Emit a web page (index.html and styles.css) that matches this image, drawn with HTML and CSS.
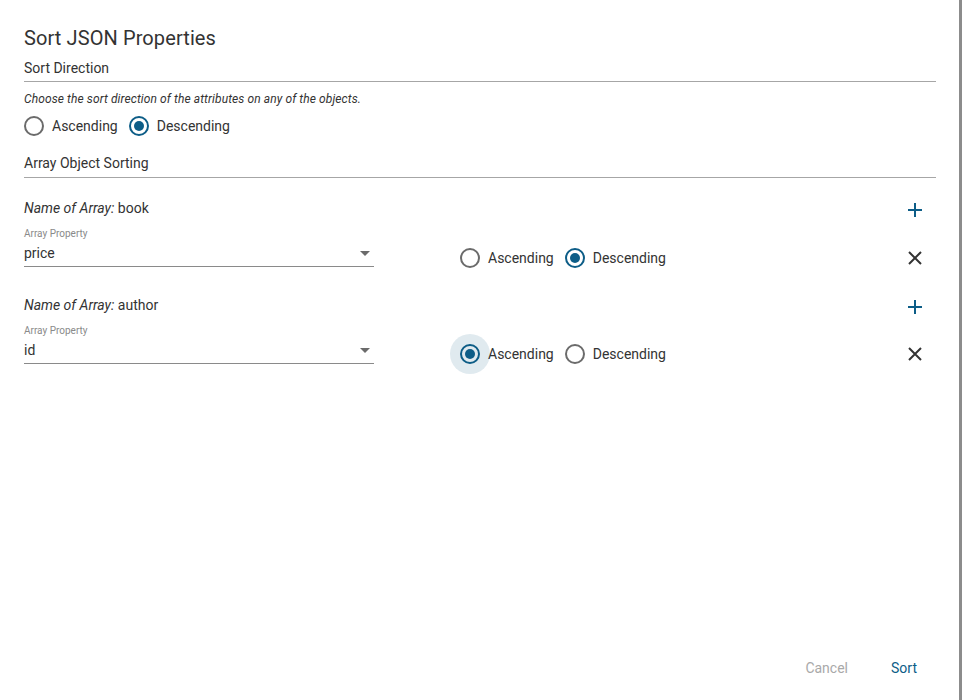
FILE: index.html
```html
<!DOCTYPE html>
<html lang="en">
<head>
<meta charset="utf-8">
<title>Sort JSON Properties</title>
<link rel="stylesheet" href="styles.css">
</head>
<body>
<div class="dialog">
  <h1 class="title">Sort JSON Properties</h1>
  <div class="section-title">Sort Direction</div>
  <div class="hint">Choose the sort direction of the attributes on any of the objects.</div>
  <div class="radio-group top-radios">
    <label class="opt"><span class="radio"></span><span>Ascending</span></label>
    <label class="opt"><span class="radio checked"></span><span>Descending</span></label>
  </div>
  <div class="section-title second">Array Object Sorting</div>

  <div class="array-group">
    <div class="name-row">
      <div class="name"><em>Name of Array:</em> book</div>
      <button class="icon-btn add" aria-label="Add">
        <svg width="16" height="16" viewBox="0 0 16 16"><path d="M8 1v14M1 8h14" stroke="currentColor" stroke-width="2" fill="none"/></svg>
      </button>
    </div>
    <div class="field-row">
      <div class="select">
        <div class="select-label">Array Property</div>
        <div class="select-value">price<span class="caret"></span></div>
      </div>
      <div class="radio-group inline">
        <label class="opt"><span class="radio"></span><span>Ascending</span></label>
        <label class="opt"><span class="radio checked"></span><span>Descending</span></label>
      </div>
      <button class="icon-btn remove" aria-label="Remove">
        <svg width="14" height="14" viewBox="0 0 14 14"><path d="M1 1l12 12M13 1L1 13" stroke="currentColor" stroke-width="2" fill="none"/></svg>
      </button>
    </div>
  </div>

  <div class="array-group">
    <div class="name-row">
      <div class="name"><em>Name of Array:</em> author</div>
      <button class="icon-btn add" aria-label="Add">
        <svg width="16" height="16" viewBox="0 0 16 16"><path d="M8 1v14M1 8h14" stroke="currentColor" stroke-width="2" fill="none"/></svg>
      </button>
    </div>
    <div class="field-row">
      <div class="select">
        <div class="select-label">Array Property</div>
        <div class="select-value">id<span class="caret"></span></div>
      </div>
      <div class="radio-group inline">
        <label class="opt"><span class="radio checked focused"></span><span>Ascending</span></label>
        <label class="opt"><span class="radio"></span><span>Descending</span></label>
      </div>
      <button class="icon-btn remove" aria-label="Remove">
        <svg width="14" height="14" viewBox="0 0 14 14"><path d="M1 1l12 12M13 1L1 13" stroke="currentColor" stroke-width="2" fill="none"/></svg>
      </button>
    </div>
  </div>

  <div class="footer">
    <button class="text-btn cancel">Cancel</button>
    <button class="text-btn primary">Sort</button>
  </div>
</div>
</body>
</html>
```

FILE: styles.css
```css
* { box-sizing: border-box; }
html, body { margin: 0; padding: 0; background: #fff; }
body {
  font-family: Roboto, "Liberation Sans", Arial, sans-serif;
  color: #333;
  font-size: 14px;
}
.dialog {
  height: 700px;
  width: 962px;
  border-right: 3px solid #8c8c8c;
  padding: 26px 23px 0 24px;
  display: flex;
  flex-direction: column;
}
.title {
  margin: 0;
  font-size: 20px;
  line-height: 24px;
  font-weight: 400;
  color: #333;
  letter-spacing: 0.1px;
}
.section-title {
  margin-top: 8px;
  font-size: 14px;
  line-height: 20px;
  padding-bottom: 3px;
  border-bottom: 1px solid #a6a6a6;
}
.section-title.second { margin-top: 17px; padding-bottom: 4px; }
.hint {
  margin-top: 9px;
  font-size: 12px;
  line-height: 16px;
  font-style: italic;
  letter-spacing: 0.1px;
}
.radio-group {
  display: flex;
  align-items: center;
  height: 20px;
}
.top-radios { margin-top: 9px; }
.opt {
  display: inline-flex;
  align-items: center;
  gap: 8px;
  margin-right: 11px;
  line-height: 20px;
  font-size: 14px;
}
.radio {
  position: relative;
  width: 20px;
  height: 20px;
  border: 2px solid #6b6b6b;
  border-radius: 50%;
  flex: none;
}
.radio.checked { border-color: #0d5d87; }
.radio.checked::after {
  content: "";
  position: absolute;
  left: 3px;
  top: 3px;
  width: 10px;
  height: 10px;
  border-radius: 50%;
  background: #0d5d87;
}
.radio.focused::before {
  content: "";
  position: absolute;
  left: -12px;
  top: -12px;
  width: 40px;
  height: 40px;
  border-radius: 50%;
  background: rgba(13, 93, 135, 0.13);
}
.array-group { margin-top: 20px; }
.array-group + .array-group { margin-top: 28px; }
.name-row {
  display: flex;
  align-items: center;
  justify-content: space-between;
  height: 20px;
  line-height: 20px;
}
.name em { font-style: italic; }
.icon-btn {
  border: 0;
  background: none;
  padding: 0;
  width: 20px;
  height: 20px;
  display: flex;
  align-items: center;
  justify-content: center;
  margin-right: 11px;
  cursor: pointer;
}
.icon-btn.add { color: #0d5d87; margin-top: 3px; }
.icon-btn.remove { color: #333; margin-bottom: -1px; }
.field-row {
  display: flex;
  align-items: flex-end;
  margin-top: 10px;
}
.select { width: 350px; }
.select-label {
  font-size: 10px;
  line-height: 12px;
  color: #8a8a8a;
}
.select-value {
  position: relative;
  margin-top: 3px;
  line-height: 20px;
  padding-bottom: 3px;
  border-bottom: 1px solid #8a8a8a;
}
.caret {
  position: absolute;
  right: 4px;
  top: 8px;
  width: 0;
  height: 0;
  border-left: 5px solid transparent;
  border-right: 5px solid transparent;
  border-top: 5px solid #6b6b6b;
}
.radio-group.inline {
  margin-left: 86px;
  margin-bottom: -1px;
  flex: 1;
}
.array-group + .array-group .radio-group.inline { margin-bottom: 0; }
.array-group + .array-group .icon-btn.remove { margin-bottom: 0; }
.footer {
  margin-top: auto;
  margin-bottom: 14px;
  display: flex;
  justify-content: flex-end;
  gap: 8px;
}
.text-btn {
  min-width: 64px;
  height: 36px;
  padding: 0 16px;
  border: 0;
  background: none;
  font-family: inherit;
  font-size: 14px;
  cursor: pointer;
}
.text-btn.cancel { color: #a9a9a9; }
.text-btn.primary { color: #0d5d87; }
```
